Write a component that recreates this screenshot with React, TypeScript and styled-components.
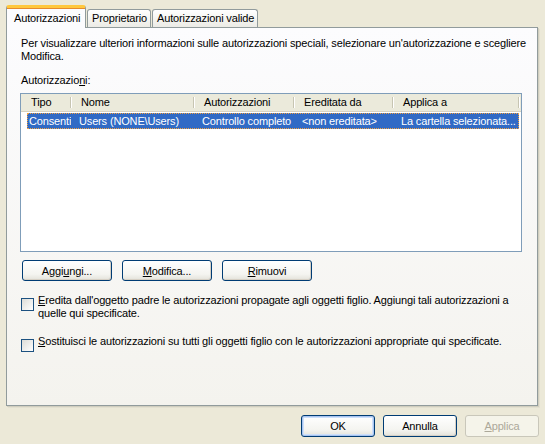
import { FunctionComponent } from "react";
import styled, { createGlobalStyle } from "styled-components";

const GlobalStyle = createGlobalStyle`
  html, body {
    margin: 0;
    padding: 0;
    background: #ece9d8;
  }
  body {
    font-family: Tahoma, "Liberation Sans", Arial, sans-serif;
    font-size: 11px;
    letter-spacing: -0.15px;
    color: #000;
  }
`;

const columns = [
  { title: "Tipo", width: 50 },
  { title: "Nome", width: 123 },
  { title: "Autorizzazioni", width: 100 },
  { title: "Ereditata da", width: 99 },
  { title: "Applica a", width: 126 },
];

const row = [
  "Consenti",
  "Users (NONE\\Users)",
  "Controllo completo",
  "<non ereditata>",
  "La cartella selezionata...",
];

const App: FunctionComponent = () => {
  return (
    <Window>
      <GlobalStyle />
      <TabStrip>
        <Tab active>Autorizzazioni</Tab>
        <Tab>Proprietario</Tab>
        <Tab>Autorizzazioni valide</Tab>
      </TabStrip>
      <Panel>
        <Description>
          Per visualizzare ulteriori informazioni sulle autorizzazioni speciali,
          selezionare un'autorizzazione e scegliere
          <br />
          Modifica.
        </Description>
        <Label>
          Autorizzazio<u>n</u>i:
        </Label>
        <ListBox>
          <HeaderRow>
            {columns.map((c) => (
              <HeaderCell key={c.title} style={{ width: c.width }}>
                {c.title}
              </HeaderCell>
            ))}
          </HeaderRow>
          <SelectedRow>
            {row.map((text, i) => (
              <Cell
                key={i}
                first={i === 0}
                style={{ width: i === 0 ? 44 : columns[i].width }}
              >
                {text}
              </Cell>
            ))}
          </SelectedRow>
        </ListBox>
        <ButtonRow>
          <Button>
            Aggi<u>u</u>ngi...
          </Button>
          <Button>
            <u>M</u>odifica...
          </Button>
          <Button>
            <u>R</u>imuovi
          </Button>
        </ButtonRow>
        <CheckRow>
          <CheckBox />
          <CheckText>
            <u>E</u>redita dall'oggetto padre le autorizzazioni propagate agli
            oggetti figlio. Aggiungi tali autorizzazioni a<br />
            quelle qui specificate.
          </CheckText>
        </CheckRow>
        <CheckRow second>
          <CheckBox />
          <CheckText>
            <u>S</u>ostituisci le autorizzazioni su tutti gli oggetti figlio con
            le autorizzazioni appropriate qui specificate.
          </CheckText>
        </CheckRow>
      </Panel>
      <Footer>
        <DialogButton primary>OK</DialogButton>
        <DialogButton>Annulla</DialogButton>
        <DialogButton disabled>
          <u>A</u>pplica
        </DialogButton>
      </Footer>
    </Window>
  );
};

interface StylesProps {
  active?: boolean;
  first?: boolean;
  second?: boolean;
  primary?: boolean;
}

const Window = styled.div`
  width: 545px;
  height: 444px;
  padding: 5px 0 0 6px;
  box-sizing: border-box;
  background: #ece9d8;
  overflow: hidden;
`;

const TabStrip = styled.div`
  display: flex;
  align-items: flex-end;
  height: 22px;
  position: relative;
  z-index: 2;
`;

const Tab = styled.div<StylesProps>`
  box-sizing: border-box;
  border: 1px solid #919b9c;
  border-bottom: none;
  border-radius: 3px 3px 0 0;
  white-space: nowrap;
  ${(p) =>
    p.active
      ? `
    width: 80px;
    height: 23px;
    margin-bottom: -1px;
    padding: 4px 0 0 7px;
    background: #fcfcfe;
    border-top: 3px solid #ffc83c;
    box-shadow: inset 0 1px 0 #e68b2c;
  `
      : `
    height: 18px;
    padding: 2px 3px 0 4px;
    background: linear-gradient(#ffffff, #f3f3ef 60%, #ecebe6);
    margin-left: 1px;
  `}
`;

const Panel = styled.div`
  box-sizing: border-box;
  width: 532px;
  height: 379px;
  border: 1px solid #919b9c;
  box-shadow: 1px 1px 0 #d0cebf, 2px 2px 0 #e3e0d0;
  background: linear-gradient(#fcfcfe, #f4f3ee);
  padding: 9px 0 0 14px;
  display: flex;
  flex-direction: column;
`;

const Description = styled.div`
  line-height: 13px;
  white-space: nowrap;
`;

const Label = styled.div`
  margin-top: 11px;
  line-height: 13px;
`;

const ListBox = styled.div`
  box-sizing: border-box;
  margin-top: 6px;
  margin-left: -1px;
  width: 502px;
  height: 159px;
  border: 1px solid #7f9db9;
  background: #ffffff;
`;

const HeaderRow = styled.div`
  display: flex;
  height: 18px;
  background: #ebeadb;
  border-bottom: 1px solid #d6d2c2;
  box-sizing: border-box;
`;

const HeaderCell = styled.div`
  box-sizing: border-box;
  height: 17px;
  line-height: 17px;
  padding-left: 10px;
  position: relative;
  white-space: nowrap;
  &::after {
    content: "";
    position: absolute;
    right: 0;
    top: 3px;
    bottom: 3px;
    width: 1px;
    background: #c7c5b2;
    box-shadow: 1px 0 0 #ffffff;
  }
`;

const SelectedRow = styled.div`
  display: flex;
  margin: 1px 0 0 6px;
  width: 492px;
  height: 16px;
  box-sizing: border-box;
  background: #316ac5;
  color: #ffffff;
  outline: 1px dotted #f0a040;
  outline-offset: -1px;
  overflow: hidden;
`;

const Cell = styled.div<StylesProps>`
  box-sizing: border-box;
  line-height: 16px;
  padding-left: ${(p) => (p.first ? 2 : 8)}px;
  white-space: nowrap;
  overflow: hidden;
  flex-shrink: 0;
`;

const ButtonRow = styled.div`
  display: flex;
  gap: 10px;
  margin-top: 8px;
  margin-left: 1px;
`;

const Button = styled.button`
  box-sizing: border-box;
  width: 90px;
  height: 21px;
  border: 1px solid #003c74;
  border-radius: 3px;
  background: linear-gradient(#ffffff, #f4f4f0 70%, #e3e2da);
  box-shadow: inset -1px -1px 0 #d6d0c5;
  font-family: inherit;
  font-size: 11px;
  letter-spacing: inherit;
  color: #000;
  padding: 0;
`;

const CheckRow = styled.div<StylesProps>`
  display: flex;
  align-items: flex-start;
  margin-top: ${(p) => (p.second ? 14 : 12)}px;
`;

const CheckBox = styled.div`
  box-sizing: border-box;
  width: 13px;
  height: 13px;
  margin-top: 5px;
  border: 1px solid #1c5180;
  background: linear-gradient(135deg, #dcdcd7, #ffffff);
  flex-shrink: 0;
`;

const CheckText = styled.div`
  margin-left: 4px;
  line-height: 13px;
  white-space: nowrap;
  padding-top: 1px;
`;

const Footer = styled.div`
  display: flex;
  justify-content: flex-end;
  gap: 8px;
  margin-top: 9px;
  padding-right: 6px;
`;

const DialogButton = styled.button<StylesProps>`
  box-sizing: border-box;
  width: 74px;
  height: 22px;
  border: 1px solid #003c74;
  border-radius: 3px;
  background: linear-gradient(#ffffff, #f4f4f0 70%, #e3e2da);
  box-shadow: ${(p) =>
    p.primary
      ? "inset 0 0 0 1px #a8c4f0, inset 0 0 0 2px #cee0fa"
      : "inset -1px -1px 0 #d6d0c5"};
  font-family: inherit;
  font-size: 11px;
  letter-spacing: inherit;
  color: #000;
  padding: 0;
  &:disabled {
    border-color: #c9c7ba;
    background: #f5f4ea;
    box-shadow: none;
    color: #aca899;
  }
`;

export default App;
